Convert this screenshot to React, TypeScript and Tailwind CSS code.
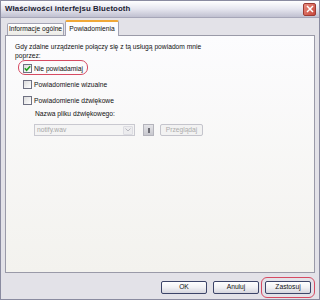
import React from "react";

function CheckRow({ checked, label, highlight }: { checked?: boolean; label: string; highlight?: boolean }) {
  return (
    <div className="relative flex items-center h-[10px] ml-[8px]">
      {highlight && (
        <div className="absolute left-[-5px] top-[-3px] w-[70px] h-[15px] rounded-[7px] border-[1.5px] border-[#d64a62]" />
      )}
      <div className="w-[9px] h-[9px] border border-[#6f7182] bg-gradient-to-br from-[#dcdcdc] to-[#ffffff] flex items-center justify-center">
        {checked && (
          <svg width="7" height="7" viewBox="0 0 7 7">
            <path d="M0.8 3.2 L2.6 5.2 L6.2 1.2" stroke="#21a121" strokeWidth="1.6" fill="none" />
          </svg>
        )}
      </div>
      <span className="ml-[2px] text-[6.7px] leading-[9px] text-[#111]">{label}</span>
    </div>
  );
}

function Btn({ label }: { label: string }) {
  return (
    <div className="w-[46px] h-[13px] rounded-[2px] border border-[#3c4468] bg-gradient-to-b from-[#ffffff] via-[#f1f1f4] to-[#d6d6de] flex items-center justify-center text-[6.7px] text-[#111]">
      {label}
    </div>
  );
}

export default function App() {
  return (
    <div
      className="w-[320px] h-[300px] flex flex-col bg-[#e3e2e8] border border-[#8a8ba0] overflow-hidden"
      style={{ fontFamily: '"Liberation Sans", Arial, sans-serif' }}
    >
      {/* Title bar */}
      <div className="h-[17px] shrink-0 flex items-center justify-between pl-[4px] pr-[3px] bg-gradient-to-b from-[#ffffff] via-[#e6e6ef] to-[#c0c0d0] border-b border-[#a6a6b8]">
        <span className="text-[7.8px] font-bold text-[#202030] tracking-[0.1px]">Właściwości interfejsu Bluetooth</span>
        <div className="w-[13px] h-[13px] rounded-[2px] border border-[#9c3a33] bg-gradient-to-br from-[#e98b7e] to-[#c6453a] flex items-center justify-center">
          <svg width="8" height="8" viewBox="0 0 8 8">
            <path d="M1 1 L7 7 M7 1 L1 7" stroke="#ffffff" strokeWidth="1.5" />
          </svg>
        </div>
      </div>

      {/* Body */}
      <div className="flex-1 flex flex-col px-[4px]">
        {/* Tabs */}
        <div className="flex items-end h-[17px] pl-[2px] relative z-10">
          <div className="w-[57px] h-[12px] border border-b-0 border-[#a3a3b4] rounded-t-[2px] bg-gradient-to-b from-[#ffffff] to-[#ecebe6] flex items-center justify-center text-[6.7px] text-[#111]">
            Informacje ogólne
          </div>
          <div className="ml-[1px] w-[54px] h-[16px] border border-b-0 border-[#a3a3b4] border-t-[2px] border-t-[#f0a838] rounded-t-[2px] bg-[#fcfcfe] flex items-center justify-center text-[6.7px] text-[#111] -mb-[1px]">
            Powiadomienia
          </div>
        </div>

        {/* Panel */}
        <div className="h-[238px] border border-[#9a9aa8] bg-gradient-to-b from-[#fcfcfe] to-[#f3f2ee] pl-[9px] pt-[6px] flex flex-col">
          <div className="text-[6.7px] leading-[9px] text-[#111]">
            Gdy zdalne urządzenie połączy się z tą usługą powiadom mnie
            <br />
            poprzez:
          </div>
          <div className="mt-[3px]">
            <CheckRow checked label="Nie powiadamiaj" highlight />
          </div>
          <div className="mt-[6px]">
            <CheckRow label="Powiadomienie wizualne" />
          </div>
          <div className="mt-[6px]">
            <CheckRow label="Powiadomienie dźwiękowe" />
          </div>
          <div className="ml-[20px] mt-[4px] text-[6.7px] leading-[9px] text-[#111]">Nazwa pliku dźwiękowego:</div>
          <div className="ml-[19px] mt-[6px] flex items-center">
            <div className="w-[101px] h-[12px] border border-[#c9c9d0] bg-[#f4f4f4] flex items-center justify-between pl-[2px] pr-[1px]">
              <span className="text-[6.7px] text-[#a6a6a6]">notify.wav</span>
              <div className="w-[10px] h-[9px] bg-[#ececee] border border-[#dcdce2] rounded-[1px] flex items-center justify-center">
                <svg width="6" height="4" viewBox="0 0 6 4">
                  <path d="M0.5 0.5 L3 3 L5.5 0.5" stroke="#b8b8c0" strokeWidth="1" fill="none" />
                </svg>
              </div>
            </div>
            <div className="ml-[8px] w-[11px] h-[12px] border border-[#b4b4bc] bg-gradient-to-b from-[#e4e4e8] to-[#c8c8ce] flex items-center justify-center">
              <div className="w-[2px] h-[5px] bg-[#6c6c74]" />
            </div>
            <div className="ml-[6px] w-[43px] h-[12px] rounded-[2px] border border-[#c4c4cc] bg-[#f2f2f2] flex items-center justify-center text-[6.7px] text-[#acacac]">
              Przeglądaj
            </div>
          </div>
        </div>

        {/* Buttons */}
        <div className="flex justify-end items-center gap-[6px] mt-[8px] pr-[4px] relative">
          <Btn label="OK" />
          <Btn label="Anuluj" />
          <div className="relative">
            <div className="absolute left-[-4px] top-[-4px] w-[54px] h-[21px] rounded-[6px] border-[1.5px] border-[#d64a62]" />
            <Btn label="Zastosuj" />
          </div>
        </div>
      </div>
    </div>
  );
}
